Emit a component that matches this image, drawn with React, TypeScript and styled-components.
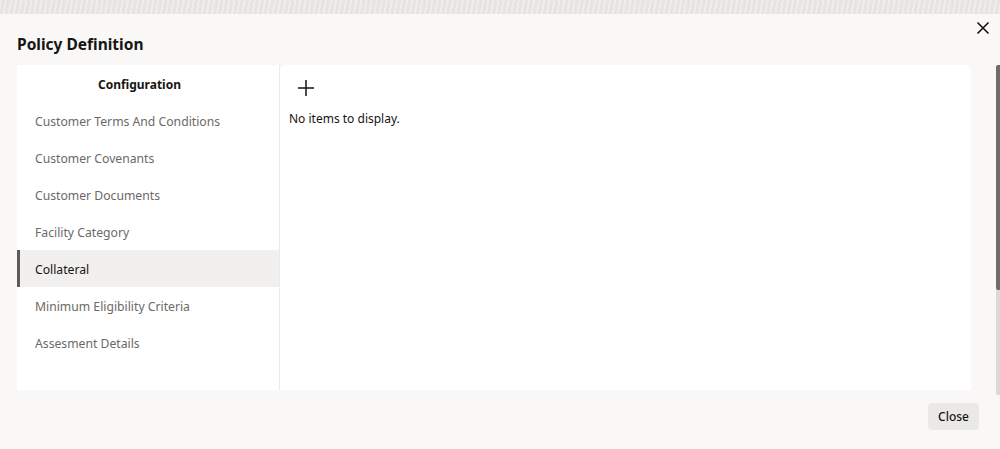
import React, { useState } from "react";
import styled, { createGlobalStyle } from "styled-components";

const GlobalStyle = createGlobalStyle`
    html, body {
        margin: 0;
        padding: 0;
        height: 449px;
        overflow: hidden;
        background: #f9f8f6;
        font-family: "Noto Sans", "Open Sans", sans-serif;
        color: #161513;
    }
`;

const Page = styled.div`
    position: relative;
    height: 449px;
    display: flex;
    flex-direction: column;
`;

const Backdrop = styled.div`
    height: 14px;
    flex-shrink: 0;
    background-color: #e6e4e1;
    background-image: repeating-linear-gradient(
        100deg,
        rgba(255, 255, 255, 0.35) 0 2px,
        transparent 2px 5px
    );
`;

const Dialog = styled.div`
    flex-grow: 1;
    display: flex;
    flex-direction: column;
    background: #f9f8f6;
    padding: 0 29px 0 17px;
`;

const Header = styled.div`
    display: flex;
    align-items: center;
    height: 50px;
`;

const Title = styled.h1`
    margin: 9px 0 0;
    font-size: 15.5px;
    font-weight: 700;
    flex-grow: 1;
`;

const CloseIcon = styled.button`
    position: absolute;
    top: 20px;
    right: 9px;
    width: 16px;
    height: 16px;
    padding: 0;
    border: none;
    background: none;
    color: #161513;
    display: flex;
    align-items: center;
    justify-content: center;
`;

const Body = styled.div`
    display: flex;
    height: 325px;
    margin-top: 1px;
`;

const Sidebar = styled.div`
    width: 262px;
    background: #fff;
    display: flex;
    flex-direction: column;
    border-right: 1px solid #ecebea;
`;

const SidebarTitle = styled.div`
    font-size: 12px;
    font-weight: 700;
    text-align: center;
    padding: 11px 17px 0 0;
    height: 37px;
    box-sizing: border-box;
`;

const NavItem = styled.div<{ $active?: boolean }>`
    height: 37px;
    display: flex;
    align-items: center;
    padding-left: ${p => (p.$active ? "15px" : "18px")};
    padding-top: 2px;
    box-sizing: border-box;
    font-size: 12.2px;
    color: ${p => (p.$active ? "#161513" : "#6b6967")};
    background: ${p => (p.$active ? "#f1f0ef" : "transparent")};
    border-left: ${p => (p.$active ? "3px solid #5d5b59" : "none")};
    cursor: pointer;
`;

const Content = styled.div`
    flex-grow: 1;
    background: #fff;
    border-radius: 6px 6px 0 0;
    padding: 10px 9px;
`;

const AddButton = styled.button`
    width: 34px;
    height: 26px;
    padding: 0;
    border: none;
    background: none;
    display: flex;
    align-items: center;
    justify-content: center;
    color: #161513;
`;

const Empty = styled.p`
    margin: 9px 0 0;
    font-size: 12px;
`;

const Footer = styled.div`
    display: flex;
    justify-content: flex-end;
    padding: 13px 0 0;
    margin-right: -8px;
`;

const Button = styled.button`
    height: 27px;
    padding: 0 10px;
    border: none;
    border-radius: 4px;
    background: #ebe9e6;
    font-family: inherit;
    font-size: 12px;
    font-weight: 500;
    color: #161513;
`;

const Scrollbar = styled.div`
    position: absolute;
    right: 0;
    top: 65px;
    width: 4px;
    height: 330px;
    background: #dcdad8;
    border-radius: 2px 0 0 2px;
`;

const Thumb = styled.div`
    height: 225px;
    background: #6f6d6b;
    border-radius: 2px 0 0 2px;
`;

const items = [
    "Customer Terms And Conditions",
    "Customer Covenants",
    "Customer Documents",
    "Facility Category",
    "Collateral",
    "Minimum Eligibility Criteria",
    "Assesment Details",
];

const App = () => {
    const [active, setActive] = useState("Collateral");

    return (
        <Page>
            <GlobalStyle />
            <Backdrop />
            <Dialog>
                <Header>
                    <Title>Policy Definition</Title>
                    <CloseIcon aria-label="close">
                        <svg width="14" height="14" viewBox="0 0 14 14">
                            <path d="M1.5 1.5 L12.5 12.5 M12.5 1.5 L1.5 12.5" stroke="currentColor" strokeWidth="1.6" />
                        </svg>
                    </CloseIcon>
                </Header>
                <Body>
                    <Sidebar>
                        <SidebarTitle>Configuration</SidebarTitle>
                        {items.map(item => (
                            <NavItem key={item} $active={item === active} onClick={() => setActive(item)}>
                                {item}
                            </NavItem>
                        ))}
                    </Sidebar>
                    <Content>
                        <AddButton aria-label="add">
                            <svg width="20" height="20" viewBox="0 0 20 20">
                                <path d="M10 2 V18 M2 10 H18" stroke="currentColor" strokeWidth="1.5" />
                            </svg>
                        </AddButton>
                        <Empty>No items to display.</Empty>
                    </Content>
                </Body>
                <Footer>
                    <Button>Close</Button>
                </Footer>
            </Dialog>
            <Scrollbar>
                <Thumb />
            </Scrollbar>
        </Page>
    );
};

export default App;
